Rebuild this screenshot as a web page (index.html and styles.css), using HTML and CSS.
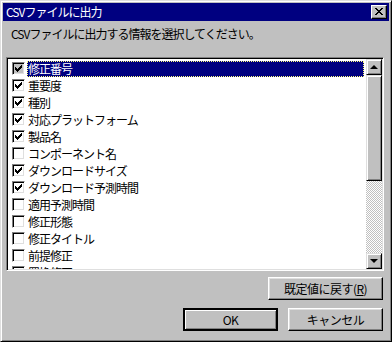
FILE: index.html
```html
<!DOCTYPE html>
<html lang="ja">
<head>
    <meta charset="UTF-8">
    <title>CSVファイルに出力</title>
    <link rel="stylesheet" href="styles.css">
</head>
<body>
    <div class="window">
        <div class="titlebar">
            <span class="title">CSVファイルに出力</span>
            <span class="close">
                <svg width="8" height="7" viewBox="0 0 8 7" shape-rendering="crispEdges">
                    <path d="M0 0h2v1h-2zM6 0h2v1h-2zM1 1h2v1h-2zM5 1h2v1h-2zM2 2h4v1h-4zM3 3h2v1h-2zM2 4h4v1h-4zM1 5h2v1h-2zM5 5h2v1h-2zM0 6h2v1h-2zM6 6h2v1h-2z" fill="#000"/>
                </svg>
            </span>
        </div>
        <div class="content">
            <p class="prompt">CSVファイルに出力する情報を選択してください。</p>
            <div class="listbox">
                <ul class="items">
                    <li class="item selected"><span class="check on"></span><span class="label">修正番号</span></li>
                    <li class="item"><span class="check on"></span><span class="label">重要度</span></li>
                    <li class="item"><span class="check on"></span><span class="label">種別</span></li>
                    <li class="item"><span class="check on"></span><span class="label">対応プラットフォーム</span></li>
                    <li class="item"><span class="check on"></span><span class="label">製品名</span></li>
                    <li class="item"><span class="check"></span><span class="label">コンポーネント名</span></li>
                    <li class="item"><span class="check on"></span><span class="label">ダウンロードサイズ</span></li>
                    <li class="item"><span class="check on"></span><span class="label">ダウンロード予測時間</span></li>
                    <li class="item"><span class="check"></span><span class="label">適用予測時間</span></li>
                    <li class="item"><span class="check"></span><span class="label">修正形態</span></li>
                    <li class="item"><span class="check"></span><span class="label">修正タイトル</span></li>
                    <li class="item"><span class="check"></span><span class="label">前提修正</span></li>
                    <li class="item"><span class="check"></span><span class="label">置換修正</span></li>
                </ul>
                <div class="scrollbar">
                    <div class="sb-btn"><span class="arrow-up"></span></div>
                    <div class="thumb"></div>
                    <div class="track"></div>
                    <div class="sb-btn"><span class="arrow-down"></span></div>
                </div>
            </div>
            <div class="reset-row">
                <button class="btn reset">既定値に戻す(<u>R</u>)</button>
            </div>
            <div class="action-row">
                <button class="btn default">OK</button>
                <button class="btn">キャンセル</button>
            </div>
        </div>
    </div>
</body>
</html>
```

FILE: styles.css
```css
body {
    margin: 0;
    padding: 0;
    background: #c0c0c0;
    font-family: "Noto Sans CJK JP", "DejaVu Sans", sans-serif;
    font-size: 12px;
    color: #000;
}
.window {
    width: 392px;
    height: 342px;
    box-sizing: border-box;
    background: #c0c0c0;
    border: 1px solid;
    border-color: #dfdfdf #000 #000 #dfdfdf;
    box-shadow: inset 1px 1px 0 #fff, inset -1px -1px 0 #808080;
    padding: 2px;
    display: flex;
    flex-direction: column;
}
.titlebar {
    height: 18px;
    background: #000080;
    color: #fff;
    display: flex;
    align-items: center;
    justify-content: space-between;
    padding: 0 2px 0 2px;
}
.title {
    line-height: 18px;
    padding-left: 1px;
    letter-spacing: -1px;
}
.close {
    width: 16px;
    height: 14px;
    box-sizing: border-box;
    background: #c0c0c0;
    border: 1px solid;
    border-color: #fff #000 #000 #fff;
    box-shadow: inset -1px -1px 0 #808080;
    display: flex;
    align-items: center;
    justify-content: center;
    padding: 0 1px 1px 0;
}
.close svg {
    display: block;
}
.content {
    flex: 1;
    display: flex;
    flex-direction: column;
    padding: 0 4px 0 3px;
}
.prompt {
    margin: 0;
    height: 36px;
    box-sizing: border-box;
    padding: 5px 0 0 5px;
    line-height: 16px;
    letter-spacing: -1px;
}
.listbox {
    height: 214px;
    box-sizing: border-box;
    border: 1px solid;
    border-color: #808080 #fff #fff #808080;
    box-shadow: inset 1px 1px 0 #000, inset -1px -1px 0 #dfdfdf;
    padding: 1px;
    display: flex;
    background: #fff;
    margin-right: 1px;
}
.items {
    flex: 1;
    list-style: none;
    margin: 0;
    padding: 1px 0 0 0;
    overflow: hidden;
}
.item {
    height: 17px;
    display: flex;
    align-items: center;
    padding-left: 4px;
}
.check {
    width: 13px;
    height: 13px;
    flex: none;
    box-sizing: border-box;
    border: 1px solid;
    border-color: #808080 #fff #fff #808080;
    box-shadow: inset 1px 1px 0 #000, inset -1px -1px 0 #dfdfdf;
    background: #fff;
}
.check.on {
    background-image: url("data:image/svg+xml;utf8,<svg xmlns='http://www.w3.org/2000/svg' width='11' height='11' shape-rendering='crispEdges'><path d='M8 2h1v3h-1zM7 3h1v3h-1zM6 4h1v3h-1zM5 5h1v3h-1zM4 6h1v3h-1zM3 5h1v3h-1zM2 4h1v3h-1z' fill='black'/></svg>");
    background-repeat: no-repeat;
    background-position: 0 0;
}
.item.selected .check {
    background-color: #c0c0c0;
}
.label {
    margin-left: 2px;
    padding-left: 1px;
    flex: 1;
    height: 16px;
    line-height: 16px;
    margin-right: 2px;
    white-space: nowrap;
    letter-spacing: -1px;
}
.item.selected .label {
    background: #000080;
    color: #fff;
    outline: 1px dotted #ffff80;
    outline-offset: -1px;
}
.scrollbar {
    width: 16px;
    display: flex;
    flex-direction: column;
}
.sb-btn, .thumb {
    box-sizing: border-box;
    background: #c0c0c0;
    border: 1px solid;
    border-color: #dfdfdf #000 #000 #dfdfdf;
    box-shadow: inset 1px 1px 0 #fff, inset -1px -1px 0 #808080;
}
.sb-btn {
    height: 16px;
    display: flex;
    align-items: center;
    justify-content: center;
}
.thumb {
    height: 106px;
}
.track {
    flex: 1;
    background-color: #fff;
    background-image: repeating-conic-gradient(#c0c0c0 0 25%, #fff 0 50%);
    background-size: 2px 2px;
}
.arrow-up {
    width: 0;
    height: 0;
    border-left: 4px solid transparent;
    border-right: 4px solid transparent;
    border-bottom: 4px solid #000;
    margin-bottom: 1px;
}
.arrow-down {
    width: 0;
    height: 0;
    border-left: 4px solid transparent;
    border-right: 4px solid transparent;
    border-top: 4px solid #000;
}
.reset-row {
    display: flex;
    justify-content: flex-end;
    margin-top: 6px;
    padding-right: 2px;
}
.action-row {
    display: flex;
    justify-content: flex-end;
    gap: 10px;
    margin-top: 8px;
    padding-right: 2px;
}
.btn {
    height: 23px;
    box-sizing: border-box;
    font-family: inherit;
    font-size: 12px;
    letter-spacing: -0.5px;
    color: #000;
    background: #c0c0c0;
    border: 1px solid;
    border-color: #fff #000 #000 #fff;
    box-shadow: inset -1px -1px 0 #808080, inset 1px 1px 0 #dfdfdf;
    padding: 0;
    width: 95px;
}
.btn.reset {
    width: 115px;
}
.btn u {
    text-decoration: underline;
}
.btn.default {
    border: 2px solid #000;
    box-shadow: inset 1px 1px 0 #fff, inset -1px -1px 0 #808080;
}
```
